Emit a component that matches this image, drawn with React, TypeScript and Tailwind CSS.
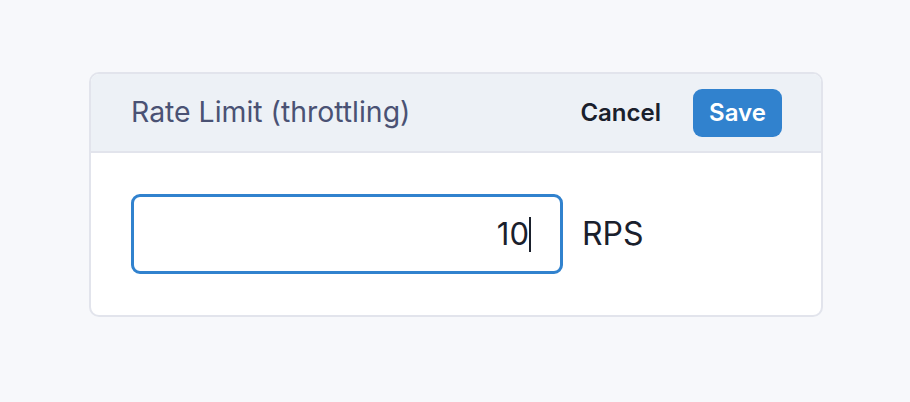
export default function App() {
  return (
    <div
      className="min-h-[402px] w-full bg-[#f7f8fb] pt-[72px] px-[88px]"
      style={{ fontFamily: 'Inter, "Noto Sans", sans-serif' }}
    >
      <div className="ml-px w-[734px] rounded-[10px] border-2 border-[#e2e4ec] bg-white overflow-hidden">
        <div className="flex h-[79px] items-center justify-between border-b-2 border-[#e2e4ec] bg-[#edf1f6] pl-[40px] pr-[39px]">
          <div className="text-[28.4px] text-[#4a5274]">Rate Limit (throttling)</div>
          <div className="flex items-center gap-[32px]">
            <button className="text-[24px] font-semibold text-[#1a202c]">Cancel</button>
            <button className="h-[48px] w-[89px] rounded-[9px] bg-[#3182ce] text-[24px] font-semibold text-white">
              Save
            </button>
          </div>
        </div>
        <div className="flex items-center gap-[19px] pl-[40px] pt-[41px] pb-[41px]">
          <div className="flex h-[80px] w-[432px] items-center justify-end rounded-[9px] border-[3px] border-[#3182ce] pr-[29px]">
            <span className="text-[31px] text-[#1a202c]">10</span>
            <span className="h-[35px] w-[2px] bg-[#1a202c]" />
          </div>
          <span className="text-[32px] text-[#1a202c]">RPS</span>
        </div>
      </div>
    </div>
  );
}
